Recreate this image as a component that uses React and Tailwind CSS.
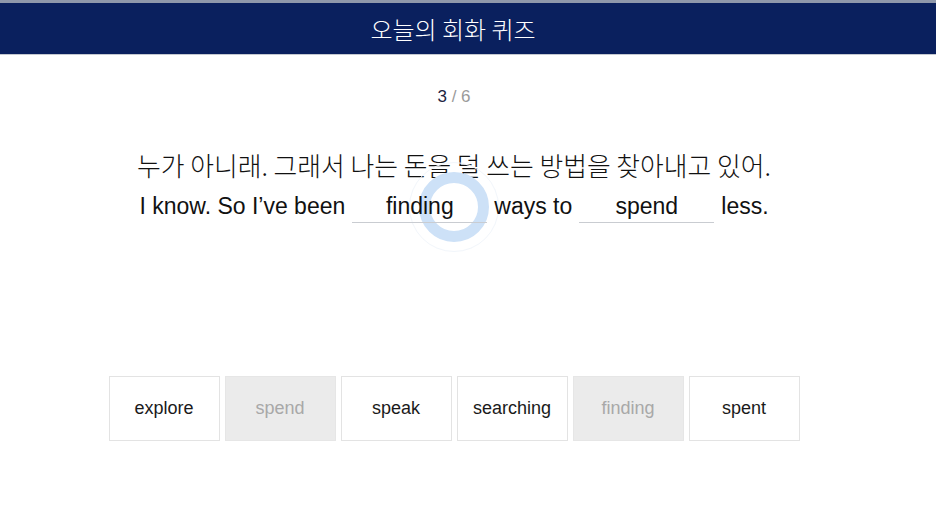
const choices = [
  { word: 'explore', used: false },
  { word: 'spend', used: true },
  { word: 'speak', used: false },
  { word: 'searching', used: false },
  { word: 'finding', used: true },
  { word: 'spent', used: false },
];

const latin = { fontFamily: '"Liberation Sans", Arial, sans-serif' };
const korean = { fontFamily: '"Noto Sans CJK KR", "Noto Sans", sans-serif' };

const Blank = ({ word }) => (
  <div className="relative z-10 w-[135px] h-[34px] border-b border-[#c9ccd1] text-center leading-[34px]">
    {word}
  </div>
);

export default function App() {
  return (
    <div className="w-[936px] h-[532px] bg-white overflow-hidden">
      {/* Header */}
      <header className="h-[55px] bg-[#0a205e] border-t-[3px] border-[#8f98ab] border-b border-b-[#c4c8d0] flex items-center justify-center pr-[30px]">
        <h1 className="text-white text-[24px] leading-none font-light" style={korean}>
          오늘의 회화 퀴즈
        </h1>
      </header>

      <main className="relative flex flex-col items-center pr-[28px]">
        {/* Progress */}
        <div className="mt-[30px] text-[17px] leading-[24px] text-[#9a9a9a]" style={latin}>
          <span className="text-[#1c2440]">3</span> / 6
        </div>

        {/* Sentence */}
        <p className="mt-[38px] text-[25.8px] leading-[36px] text-[#111] font-light" style={korean}>
          누가 아니래. 그래서 나는 돈을 덜 쓰는 방법을 찾아내고 있어.
        </p>

        <div className="relative mt-[6px] flex items-center gap-[7px] text-[23px] leading-[34px] text-[#111]" style={latin}>
          {/* tap ripple */}
          <div className="absolute z-0 left-[270px] top-[-27px] w-[90px] h-[90px] rounded-full border border-[#f2f6fb] flex items-center justify-center">
            <div className="w-[70px] h-[70px] rounded-full border-[11px] border-[#cde1f7]" />
          </div>
          <span className="relative z-10">I know. So I’ve been</span>
          <Blank word="finding" />
          <span className="relative z-10">ways to</span>
          <Blank word="spend" />
          <span className="relative z-10">less.</span>
        </div>

        {/* Choices */}
        <div className="mt-[153px] flex gap-[5px]" style={latin}>
          {choices.map((c) => (
            <button
              key={c.word}
              className={
                c.used
                  ? 'w-[111px] h-[65px] border border-[#e6e6e6] bg-[#ebebeb] text-[#a8a8a8] text-[18px]'
                  : 'w-[111px] h-[65px] border border-[#e3e3e3] bg-white text-[#1a1a1a] text-[18px]'
              }
            >
              {c.word}
            </button>
          ))}
        </div>
      </main>
    </div>
  );
}
